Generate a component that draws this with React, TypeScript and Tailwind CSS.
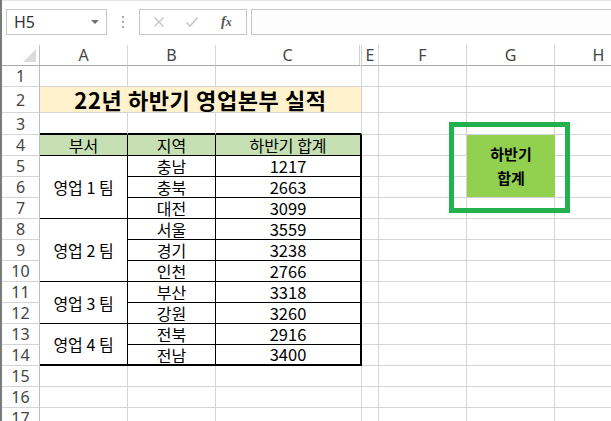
import React from "react";

const grid = "border-r border-b border-[#d4d4d4]";
const rowHead =
  "border-r border-b border-r-[#bdbdbd] border-b-[#d4d4d4] flex items-center justify-center text-[16px] text-[#444] font-['Noto_Sans',sans-serif]";
const colHead =
  "border-r border-b border-r-[#d8d8d8] border-b-[#ababab] flex items-center justify-center text-[16px] text-[#444] font-['Noto_Sans',sans-serif]";
const kr = "font-['Noto_Sans_CJK_KR',sans-serif]";

const teams = [
  { name: "영업 1 팀", span: "row-span-3", rows: [["충남", 1217], ["충북", 2663], ["대전", 3099]] },
  { name: "영업 2 팀", span: "row-span-3", rows: [["서울", 3559], ["경기", 3238], ["인천", 2766]] },
  { name: "영업 3 팀", span: "row-span-2", rows: [["부산", 3318], ["강원", 3260]] },
  { name: "영업 4 팀", span: "row-span-2", rows: [["전북", 2916], ["전남", 3400]] },
];

function Toolbar() {
  return (
    <div className="h-[45px] flex items-start pt-[8px] border-t border-[#e6e6e6]">
      {/* Name box */}
      <div className="ml-[4px] w-[101px] h-[26px] border border-[#c6c6c6] flex items-center justify-between pl-[7px] pr-[7px]">
        <span className="text-[16px] text-[#333] font-['Noto_Sans',sans-serif] leading-none">H5</span>
        <span className="w-0 h-0 border-x-[4px] border-x-transparent border-t-[4px] border-t-[#707070]" />
      </div>

      <div className="w-[32px] h-[26px] flex flex-col items-center justify-center gap-[3px]">
        <span className="w-[2px] h-[2px] bg-[#a8a8a8]" />
        <span className="w-[2px] h-[2px] bg-[#a8a8a8]" />
        <span className="w-[2px] h-[2px] bg-[#a8a8a8]" />
      </div>

      {/* Formula buttons */}
      <div className="w-[108px] h-[26px] border border-[#c6c6c6] flex items-center">
        <svg className="ml-[13px]" width="12" height="12" viewBox="0 0 12 12">
          <path d="M1.5 1.5 L10.5 10.5 M10.5 1.5 L1.5 10.5" stroke="#c2c2c2" strokeWidth="1.2" fill="none" />
        </svg>
        <svg className="ml-[20px]" width="14" height="12" viewBox="0 0 14 12">
          <path d="M1.5 6.5 L5 10 L12.5 1.5" stroke="#c6c6c6" strokeWidth="1.6" fill="none" />
        </svg>
        <span className="ml-[22px] text-[14px] italic font-bold text-[#555] font-['Liberation_Serif',serif] leading-none">
          f<span className="text-[12px]">x</span>
        </span>
      </div>

      <div className="ml-[4px] flex-1 h-[26px] border border-r-0 border-[#c6c6c6] bg-[#fdfdfd]" />
    </div>
  );
}

export default function App() {
  const cells: React.ReactNode[] = [];
  let k = 0;
  const push = (node: React.ReactNode) => cells.push(<React.Fragment key={k++}>{node}</React.Fragment>);

  // column headers
  push(
    <div className="border-r border-b border-r-[#bdbdbd] border-b-[#ababab] flex items-end justify-end pr-[3px] pb-[3px]">
      <span className="w-0 h-0 border-l-[13px] border-l-transparent border-b-[13px] border-b-[#dcdcdc]" />
    </div>
  );
  push(<div className={colHead}>A</div>);
  push(<div className={colHead}>B</div>);
  push(<div className="border-r-[3px] border-double border-b border-r-[#d0d0d0] border-b-[#ababab] flex items-center justify-center text-[16px] text-[#444] font-['Noto_Sans',sans-serif]">C</div>);
  push(<div className={colHead}>E</div>);
  push(<div className={colHead}>F</div>);
  push(<div className={colHead}>G</div>);
  push(<div className={colHead}>H</div>);

  const tail = (withG: boolean) => {
    push(<div className={grid} />);
    push(<div className={grid} />);
    if (withG) push(<div className={grid} />);
    push(<div className={grid} />);
  };

  // row 1
  push(<div className={rowHead}>1</div>);
  for (let i = 0; i < 3; i++) push(<div className={grid} />);
  tail(true);

  // row 2 : title
  push(<div className={rowHead}>2</div>);
  push(
    <div className={`col-span-3 bg-[#fff2cc] ${grid} flex items-center justify-center text-[22px] tracking-[0.6px] font-bold text-black ${kr}`}>
      22년 하반기 영업본부 실적
    </div>
  );
  tail(true);

  // row 3
  push(<div className={rowHead}>3</div>);
  for (let i = 0; i < 3; i++)
    push(<div className="border-r border-b-2 border-r-[#d4d4d4] border-b-black" />);
  tail(true);

  // row 4 : table header + green block
  const th = `bg-[#c6e0b4] border-b border-black flex items-center justify-center text-[16px] text-black leading-none ${kr}`;
  push(<div className={rowHead}>4</div>);
  push(<div className={`${th} border-r`}>부서</div>);
  push(<div className={`${th} border-r`}>지역</div>);
  push(<div className={`${th} border-r-2`}>하반기 합계</div>);
  push(<div className={grid} />);
  push(<div className={grid} />);
  push(
    <div className={`row-span-3 bg-[#92d050] border-b border-[#d4d4d4] flex flex-col items-center justify-center text-[15px] font-bold leading-[24px] text-black ${kr}`}>
      <span>하반기</span>
      <span>합계</span>
    </div>
  );
  push(<div className={grid} />);

  let rowNo = 5;
  teams.forEach((t, ti) => {
    const lastTeam = ti === teams.length - 1;
    t.rows.forEach(([region, value], ri) => {
      const lastRow = lastTeam && ri === t.rows.length - 1;
      const bottom = lastRow ? "border-b-2" : "border-b";
      push(<div className={rowHead}>{rowNo}</div>);
      if (ri === 0)
        push(
          <div className={`${t.span} border-r ${lastTeam ? "border-b-2" : "border-b"} border-black flex items-center justify-center text-[16px] text-black leading-none ${kr}`}>
            {t.name}
          </div>
        );
      push(
        <div className={`border-r ${bottom} border-black flex items-center justify-center text-[16px] text-black leading-none ${kr}`}>
          {region}
        </div>
      );
      push(
        <div className={`border-r-2 ${bottom} border-black flex items-center justify-center text-[16.5px] text-black leading-none ${kr}`}>
          {value}
        </div>
      );
      tail(rowNo > 6);
      rowNo++;
    });
  });

  // rows 15-17
  for (let r = 15; r <= 17; r++) {
    push(<div className={rowHead}>{r}</div>);
    for (let i = 0; i < 3; i++) push(<div className={grid} />);
    tail(true);
  }

  return (
    <div className="relative w-[611px] h-[421px] overflow-hidden bg-white border-l-2 border-[#7a7a7a]">
      <Toolbar />
      <div className="grid grid-cols-[38px_88px_88px_146px_17px_88px_88px_88px] grid-rows-[21px_21px_26px_22px_repeat(14,21px)]">
        {cells}
      </div>
      {/* shape outline over G4:G6 */}
      <div className="absolute left-[447px] top-[122px] w-[121px] h-[91px] border-[5px] border-[#22b14c]" />
    </div>
  );
}
